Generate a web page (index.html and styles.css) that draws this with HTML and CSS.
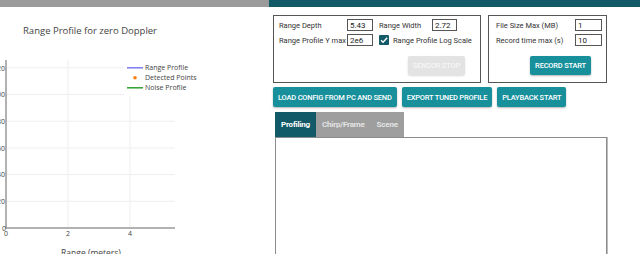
FILE: index.html
```html
<!DOCTYPE html>
<html lang="en">
<head>
    <meta charset="UTF-8">
    <title>Range Profile Tuning</title>
    <link rel="stylesheet" href="styles.css">
</head>
<body>
    <div class="topbar">
        <div class="topbar-left"></div>
        <div class="topbar-right"></div>
    </div>

    <div class="layout">
        <!-- plot -->
        <section class="chart-col">
            <svg class="chart" width="269" height="260" viewBox="0 0 269 260">
                <text class="chart-title" x="23" y="27">Range Profile for zero Doppler</text>

                <g class="grid">
                    <line x1="6" y1="60.8" x2="175" y2="60.8"/>
                    <line x1="6" y1="87.5" x2="175" y2="87.5"/>
                    <line x1="6" y1="114.2" x2="175" y2="114.2"/>
                    <line x1="6" y1="140.9" x2="175" y2="140.9"/>
                    <line x1="6" y1="167.6" x2="175" y2="167.6"/>
                    <line x1="6" y1="194.3" x2="175" y2="194.3"/>
                    <line x1="68" y1="53" x2="68" y2="221"/>
                    <line x1="130" y1="53" x2="130" y2="221"/>
                </g>

                <g class="axis">
                    <line x1="6" y1="53" x2="6" y2="221.5"/>
                    <line x1="5.5" y1="221" x2="175" y2="221"/>
                </g>

                <g class="tick tick-y">
                    <text x="5" y="63.5">120</text>
                    <text x="5" y="90.2">100</text>
                    <text x="5" y="116.9">80</text>
                    <text x="5" y="143.6">60</text>
                    <text x="5" y="170.3">40</text>
                    <text x="5" y="197">20</text>
                    <text x="6" y="223.5">0</text>
                </g>
                <g class="tick tick-x">
                    <text x="6" y="229">0</text>
                    <text x="68" y="229">2</text>
                    <text x="130" y="229">4</text>
                </g>
                <text class="axis-title" x="91" y="249">Range (meters)</text>

                <g class="legend">
                    <rect x="124" y="52" width="80" height="37" fill="#fff"/>
                    <line x1="127" y1="60.8" x2="143" y2="60.8" stroke="#7b7bf5" stroke-width="1.5"/>
                    <circle cx="135" cy="70.8" r="1.8" fill="#ff7f0e"/>
                    <line x1="127" y1="80.8" x2="143" y2="80.8" stroke="#2ca02c" stroke-width="1.5"/>
                    <text x="145" y="63.3">Range Profile</text>
                    <text x="145" y="73.3">Detected Points</text>
                    <text x="145" y="83.3">Noise Profile</text>
                </g>
            </svg>
        </section>

        <!-- controls -->
        <section class="control-col">
            <div class="settings-row">
                <div class="panel range-panel">
                    <div class="field-row">
                        <label class="lbl lbl-depth">Range Depth</label>
                        <input class="num num-a" value="5.43">
                        <label class="lbl lbl-width">Range Width</label>
                        <input class="num num-b" value="2.72">
                    </div>
                    <div class="field-row">
                        <label class="lbl lbl-depth">Range Profile Y max</label>
                        <input class="num num-a" value="2e6">
                        <label class="check">
                            <span class="check-box">
                                <svg width="10" height="10" viewBox="0 0 10 10"><path d="M2 5.2 L4.1 7.3 L8.2 2.8" fill="none" stroke="#fff" stroke-width="1.4"/></svg>
                            </span>
                            Range Profile Log Scale
                        </label>
                    </div>
                    <div class="panel-actions">
                        <button class="btn btn-disabled" disabled>Sensor Stop</button>
                    </div>
                </div>

                <div class="panel record-panel">
                    <div class="field-row">
                        <label class="lbl lbl-record">File Size Max (MB)</label>
                        <input class="num num-c" value="1">
                    </div>
                    <div class="field-row">
                        <label class="lbl lbl-record">Record time max (s)</label>
                        <input class="num num-c" value="10">
                    </div>
                    <div class="panel-actions">
                        <button class="btn">Record Start</button>
                    </div>
                </div>
            </div>

            <div class="action-row">
                <button class="btn btn-wide">Load config from PC and send</button>
                <button class="btn btn-wide">Export tuned profile</button>
                <button class="btn btn-wide">Playback start</button>
            </div>

            <div class="tabs">
                <div class="tab active">Profiling</div>
                <div class="tab">Chirp/Frame</div>
                <div class="tab">Scene</div>
            </div>
            <div class="tab-panel"></div>
        </section>
    </div>
</body>
</html>
```

FILE: styles.css
```css
* {
    margin: 0;
    padding: 0;
    box-sizing: border-box;
}

html, body {
    overflow: hidden;
}

body {
    font-family: Roboto, 'Liberation Sans', sans-serif;
    background: #fff;
    color: #333;
    width: 640px;
    height: 254px;
}

.topbar {
    display: flex;
    height: 7px;
}

.topbar-left {
    width: 269px;
    background: #9b9b9b;
}

.topbar-right {
    flex: 1;
    background: #135a69;
}

.layout {
    display: flex;
}

/* chart */
.chart-col {
    width: 269px;
    flex: none;
}

.chart {
    display: block;
    font-family: 'Open Sans', sans-serif;
}

.chart-title {
    font-size: 9.5px;
    fill: #444;
}

.grid line {
    stroke: #eee;
    stroke-width: 1;
}

.axis line {
    stroke: #999;
    stroke-width: 1.5;
}

.tick text {
    font-size: 7px;
    fill: #444;
}

.tick-y text {
    text-anchor: end;
}

.tick-x text {
    text-anchor: middle;
}

.axis-title {
    font-size: 8.5px;
    fill: #444;
    text-anchor: middle;
}

.legend text {
    font-size: 7px;
    fill: #444;
}

/* controls */
.control-col {
    padding: 8px 0 0 4px;
}

.settings-row {
    display: flex;
    gap: 7px;
}

.panel {
    border: 1px solid #555;
    height: 68px;
}

.range-panel {
    width: 208px;
    padding: 3px 0 0 5px;
}

.record-panel {
    width: 119px;
    padding: 3px 0 0 7px;
}

.field-row {
    display: flex;
    align-items: center;
    height: 12px;
    margin-bottom: 3px;
}

.lbl {
    font-size: 7.5px;
    color: #333;
    white-space: nowrap;
}

.lbl-depth {
    width: 68px;
}

.lbl-width {
    width: 53px;
    margin-left: 6px;
}

.lbl-record {
    width: 79px;
}

.num {
    height: 12px;
    border: 1px solid #555;
    font-family: Roboto, sans-serif;
    font-size: 8px;
    color: #222;
    padding: 0 2px;
    outline: none;
}

.num-a { width: 26px; }
.num-b { width: 25px; }
.num-c { width: 27px; }

.check {
    display: flex;
    align-items: center;
    gap: 4px;
    margin-left: 6px;
    font-size: 7.5px;
    color: #333;
    white-space: nowrap;
}

.check-box {
    width: 10px;
    height: 10px;
    background: #135a69;
    border-radius: 1px;
    display: flex;
}

.panel-actions {
    display: flex;
    justify-content: flex-end;
    margin-top: 10px;
    padding-right: 15px;
}

.btn {
    height: 19px;
    padding: 0 5px;
    border: none;
    border-radius: 2px;
    background: #17909c;
    color: #fff;
    font-family: Roboto, sans-serif;
    font-size: 7.5px;
    font-weight: 500;
    text-transform: uppercase;
    letter-spacing: -0.2px;
    box-shadow: 0 1px 2px rgba(0,0,0,0.3);
}

.btn-disabled {
    background: #e3e3e3;
    color: #f6f6f6;
    box-shadow: 0 1px 2px rgba(0,0,0,0.15);
}

.action-row {
    display: flex;
    gap: 5px;
    margin-top: 4px;
}

.btn-wide {
    height: 20px;
    padding: 0 5px;
}

.tabs {
    display: flex;
    margin: 5px 0 0 2px;
}

.tab {
    height: 25px;
    line-height: 25px;
    padding: 0 6px;
    font-size: 8px;
    font-weight: 700;
    letter-spacing: -0.2px;
    background: #9e9e9e;
    color: #e4e4e4;
}

.tab.active {
    background: #135a69;
    color: #fff;
}

.tab-panel {
    margin-left: 2px;
    width: 332px;
    height: 130px;
    border: 1px solid #8c8c8c;
    box-shadow: 1px 0 0 #bbb;
}
```
